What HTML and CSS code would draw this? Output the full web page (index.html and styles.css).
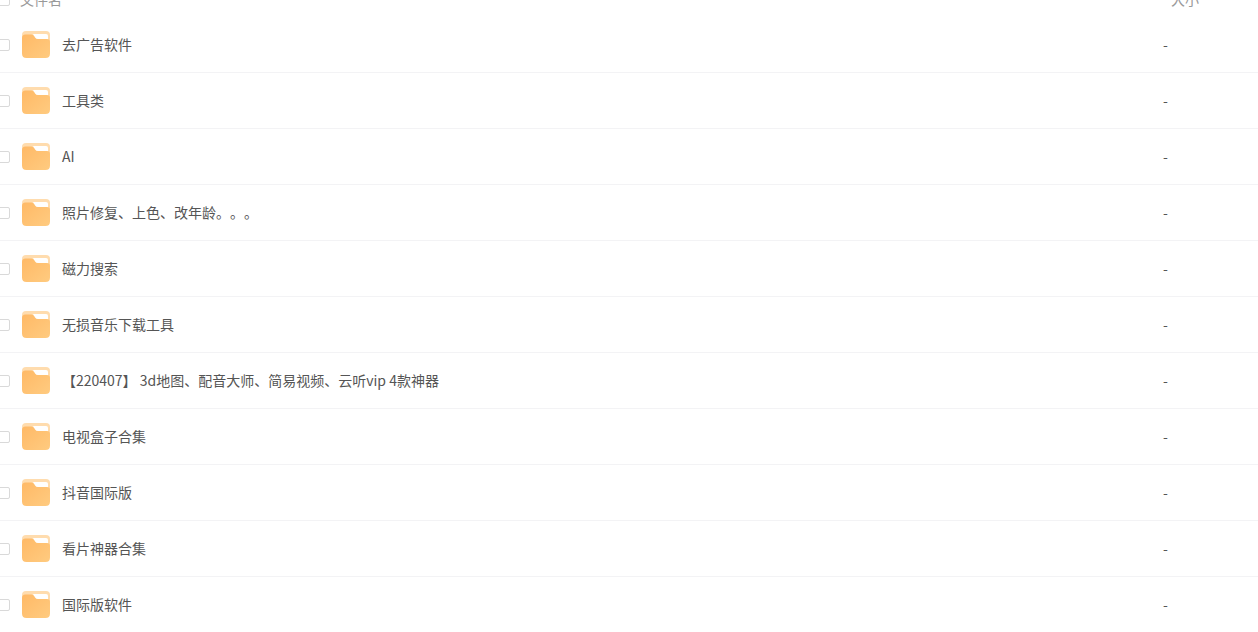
FILE: index.html
```
<!DOCTYPE html>
<html lang="zh-CN">
  <head>
    <meta charset="UTF-8" />
    <title>文件列表</title>
    <link rel="stylesheet" href="styles.css">
  </head>
  <body>
    <!-- Folder icon shared by all rows -->
    <svg class="sprite" width="0" height="0" aria-hidden="true">
      <defs>
        <linearGradient id="folderFill" x1="0" y1="0" x2="1" y2="1">
          <stop offset="0" stop-color="#ffb966" />
          <stop offset="1" stop-color="#ffcb80" />
        </linearGradient>
      </defs>
      <symbol id="folder" viewBox="0 0 28 28">
        <rect x="0" y="1" width="28" height="24" rx="4" fill="#ffdcae" />
        <path d="M11 4h13q2 0 2 2v5H15z" fill="#fff" />
        <path d="M0 8q0-3.500 3.500-3.500h6q1.500 0 2.500 1.500l1 1.500q1 1.500 3 1.500h9q3 0 3 3v11.500q0 4.500-4.500 4.500h-19Q0 28 0 23.500z" fill="url(#folderFill)" />
      </symbol>
    </svg>

    <div class="file-list">
      <table class="file-table">
        <thead>
          <tr>
            <th class="col-check"><input type="checkbox" class="check" aria-label="全选" /></th>
            <th class="col-name">文件名</th>
            <th class="col-size">大小</th>
          </tr>
        </thead>
        <tbody>
          <tr>
            <td class="col-check"><input type="checkbox" class="check" id="f1" /></td>
            <td class="col-name"><label class="file-name" for="f1"><svg class="folder"><use href="#folder" /></svg><span>去广告软件</span></label></td>
            <td class="col-size">-</td>
          </tr>
          <tr>
            <td class="col-check"><input type="checkbox" class="check" id="f2" /></td>
            <td class="col-name"><label class="file-name" for="f2"><svg class="folder"><use href="#folder" /></svg><span>工具类</span></label></td>
            <td class="col-size">-</td>
          </tr>
          <tr>
            <td class="col-check"><input type="checkbox" class="check" id="f3" /></td>
            <td class="col-name"><label class="file-name" for="f3"><svg class="folder"><use href="#folder" /></svg><span>AI</span></label></td>
            <td class="col-size">-</td>
          </tr>
          <tr>
            <td class="col-check"><input type="checkbox" class="check" id="f4" /></td>
            <td class="col-name"><label class="file-name" for="f4"><svg class="folder"><use href="#folder" /></svg><span>照片修复、上色、改年龄。。。</span></label></td>
            <td class="col-size">-</td>
          </tr>
          <tr>
            <td class="col-check"><input type="checkbox" class="check" id="f5" /></td>
            <td class="col-name"><label class="file-name" for="f5"><svg class="folder"><use href="#folder" /></svg><span>磁力搜索</span></label></td>
            <td class="col-size">-</td>
          </tr>
          <tr>
            <td class="col-check"><input type="checkbox" class="check" id="f6" /></td>
            <td class="col-name"><label class="file-name" for="f6"><svg class="folder"><use href="#folder" /></svg><span>无损音乐下载工具</span></label></td>
            <td class="col-size">-</td>
          </tr>
          <tr>
            <td class="col-check"><input type="checkbox" class="check" id="f7" /></td>
            <td class="col-name"><label class="file-name" for="f7"><svg class="folder"><use href="#folder" /></svg><span>【220407】 3d地图、配音大师、简易视频、云听vip 4款神器</span></label></td>
            <td class="col-size">-</td>
          </tr>
          <tr>
            <td class="col-check"><input type="checkbox" class="check" id="f8" /></td>
            <td class="col-name"><label class="file-name" for="f8"><svg class="folder"><use href="#folder" /></svg><span>电视盒子合集</span></label></td>
            <td class="col-size">-</td>
          </tr>
          <tr>
            <td class="col-check"><input type="checkbox" class="check" id="f9" /></td>
            <td class="col-name"><label class="file-name" for="f9"><svg class="folder"><use href="#folder" /></svg><span>抖音国际版</span></label></td>
            <td class="col-size">-</td>
          </tr>
          <tr>
            <td class="col-check"><input type="checkbox" class="check" id="f10" /></td>
            <td class="col-name"><label class="file-name" for="f10"><svg class="folder"><use href="#folder" /></svg><span>看片神器合集</span></label></td>
            <td class="col-size">-</td>
          </tr>
          <tr>
            <td class="col-check"><input type="checkbox" class="check" id="f11" /></td>
            <td class="col-name"><label class="file-name" for="f11"><svg class="folder"><use href="#folder" /></svg><span>国际版软件</span></label></td>
            <td class="col-size">-</td>
          </tr>
        </tbody>
      </table>
    </div>
  </body>
</html>
```

FILE: styles.css
```
body {
  margin: 0;
  background-color: #fff;
  color: #555;
  font-family: "Noto Sans CJK SC", sans-serif;
  font-size: 14px;
  line-height: 20px;
  text-spacing-trim: space-all;
}

.sprite {
  display: block;
}

.file-list {
  display: flow-root;
  overflow: hidden;
}

.file-table {
  width: calc(100% + 2px);
  margin: -17px 0 0 -2px;
  border-spacing: 0;
  table-layout: fixed;
}

th,
td {
  box-sizing: border-box;
  height: 56px;
  padding: 0;
  border-bottom: 1px solid #f3f3f5;
  text-align: left;
  vertical-align: middle;
}

th {
  height: 34px;
  border-bottom: none;
  color: #999;
  font-weight: normal;
}

tbody tr:last-child td {
  height: 55px;
  border-bottom: none;
}

.col-check {
  width: 22px;
}

.col-name,
.col-size {
  padding-bottom: 2px;
}

td.col-name {
  padding-left: 2px;
}

.col-size {
  width: 95px;
}

th.col-size {
  padding-left: 8px;
}

.check {
  display: block;
  box-sizing: border-box;
  width: 12px;
  height: 12px;
  margin: 0;
  appearance: none;
  border: 1px solid #d9d9d9;
  border-radius: 2px;
  background-color: #fff;
}

.file-name {
  display: flex;
  align-items: center;
  gap: 12px;
}

.folder {
  flex: none;
  width: 28px;
  height: 28px;
}
```
